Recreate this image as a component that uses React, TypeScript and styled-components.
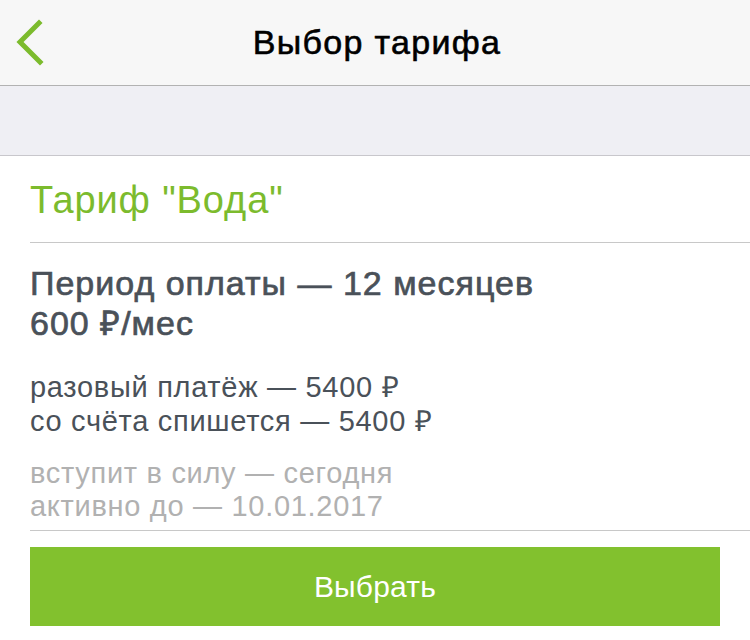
import React from 'react'
import styled, { createGlobalStyle } from 'styled-components'

const GlobalStyle = createGlobalStyle`
  html, body {
    margin: 0;
    padding: 0;
    background: #ffffff;
    font-family: "Liberation Sans", Arial, sans-serif;
  }
`

const Page = styled.div`
  width: 750px;
  height: 640px;
  overflow: hidden;
  background: #ffffff;
`

const NavBar = styled.div`
  position: relative;
  height: 85px;
  display: flex;
  align-items: center;
  justify-content: center;
  background: #f7f7f7;
  border-bottom: 1px solid #b2b2b2;
`

const BackButton = styled.button`
  position: absolute;
  left: 12px;
  top: 16px;
  width: 36px;
  height: 52px;
  padding: 0;
  border: 0;
  background: none;
  cursor: pointer;
`

const Title = styled.h1`
  margin: 0 0 0 4px;
  font-size: 34px;
  font-weight: 400;
  color: #000000;
  letter-spacing: 1.3px;
  -webkit-text-stroke: 0.6px #000000;
`

const Band = styled.div`
  height: 69px;
  background: #efeff4;
  border-bottom: 1px solid #c8c7cc;
`

const Content = styled.div`
  padding-left: 30px;
`

const TariffName = styled.div`
  height: 87px;
  display: flex;
  align-items: center;
  padding-top: 2px;
  box-sizing: border-box;
  font-size: 38px;
  letter-spacing: 0.9px;
  color: #7cbb2d;
  border-bottom: 1px solid #c8c8c8;
`

const Info = styled.div`
  padding: 20px 0 7px;
  border-bottom: 1px solid #c8c8c8;
`

const Group = styled.div<{ $size: number; $line: number; $color: string; $medium?: boolean; $gap?: number }>`
  font-size: ${p => p.$size}px;
  line-height: ${p => p.$line}px;
  color: ${p => p.$color};
  letter-spacing: 0.7px;
  margin-bottom: ${p => p.$gap ?? 0}px;
  ${p => (p.$medium ? `-webkit-text-stroke: 0.7px ${p.$color}; letter-spacing: 1px;` : '')}
`

const SelectButton = styled.button`
  display: block;
  width: 690px;
  height: 79px;
  margin-top: 16px;
  border: 0;
  background: #82c12e;
  color: #ffffff;
  font-family: inherit;
  font-size: 30px;
  letter-spacing: 0.2px;
  cursor: pointer;
`

const Chevron = () => (
  <svg width="36" height="52" viewBox="0 0 36 52">
    <polyline
      points="27,7 8,26 28,46"
      fill="none"
      stroke="#7cbb2d"
      strokeWidth="5"
      strokeLinecap="square"
    />
  </svg>
)

const App = () => (
  <Page>
    <GlobalStyle />
    <NavBar>
      <BackButton>
        <Chevron />
      </BackButton>
      <Title>Выбор тарифа</Title>
    </NavBar>
    <Band />
    <Content>
      <TariffName>Тариф "Вода"</TariffName>
      <Info>
        <Group $size={34} $line={40} $color="#4a5159" $medium $gap={27}>
          <div>Период оплаты — 12 месяцев</div>
          <div>600 ₽/мес</div>
        </Group>
        <Group $size={29} $line={34} $color="#4a5159" $gap={19}>
          <div>разовый платёж — 5400 ₽</div>
          <div>со счёта спишется — 5400 ₽</div>
        </Group>
        <Group $size={29} $line={33} $color="#b1b1b1">
          <div>вступит в силу — сегодня</div>
          <div>активно до — 10.01.2017</div>
        </Group>
      </Info>
      <SelectButton>Выбрать</SelectButton>
    </Content>
  </Page>
)

export default App
